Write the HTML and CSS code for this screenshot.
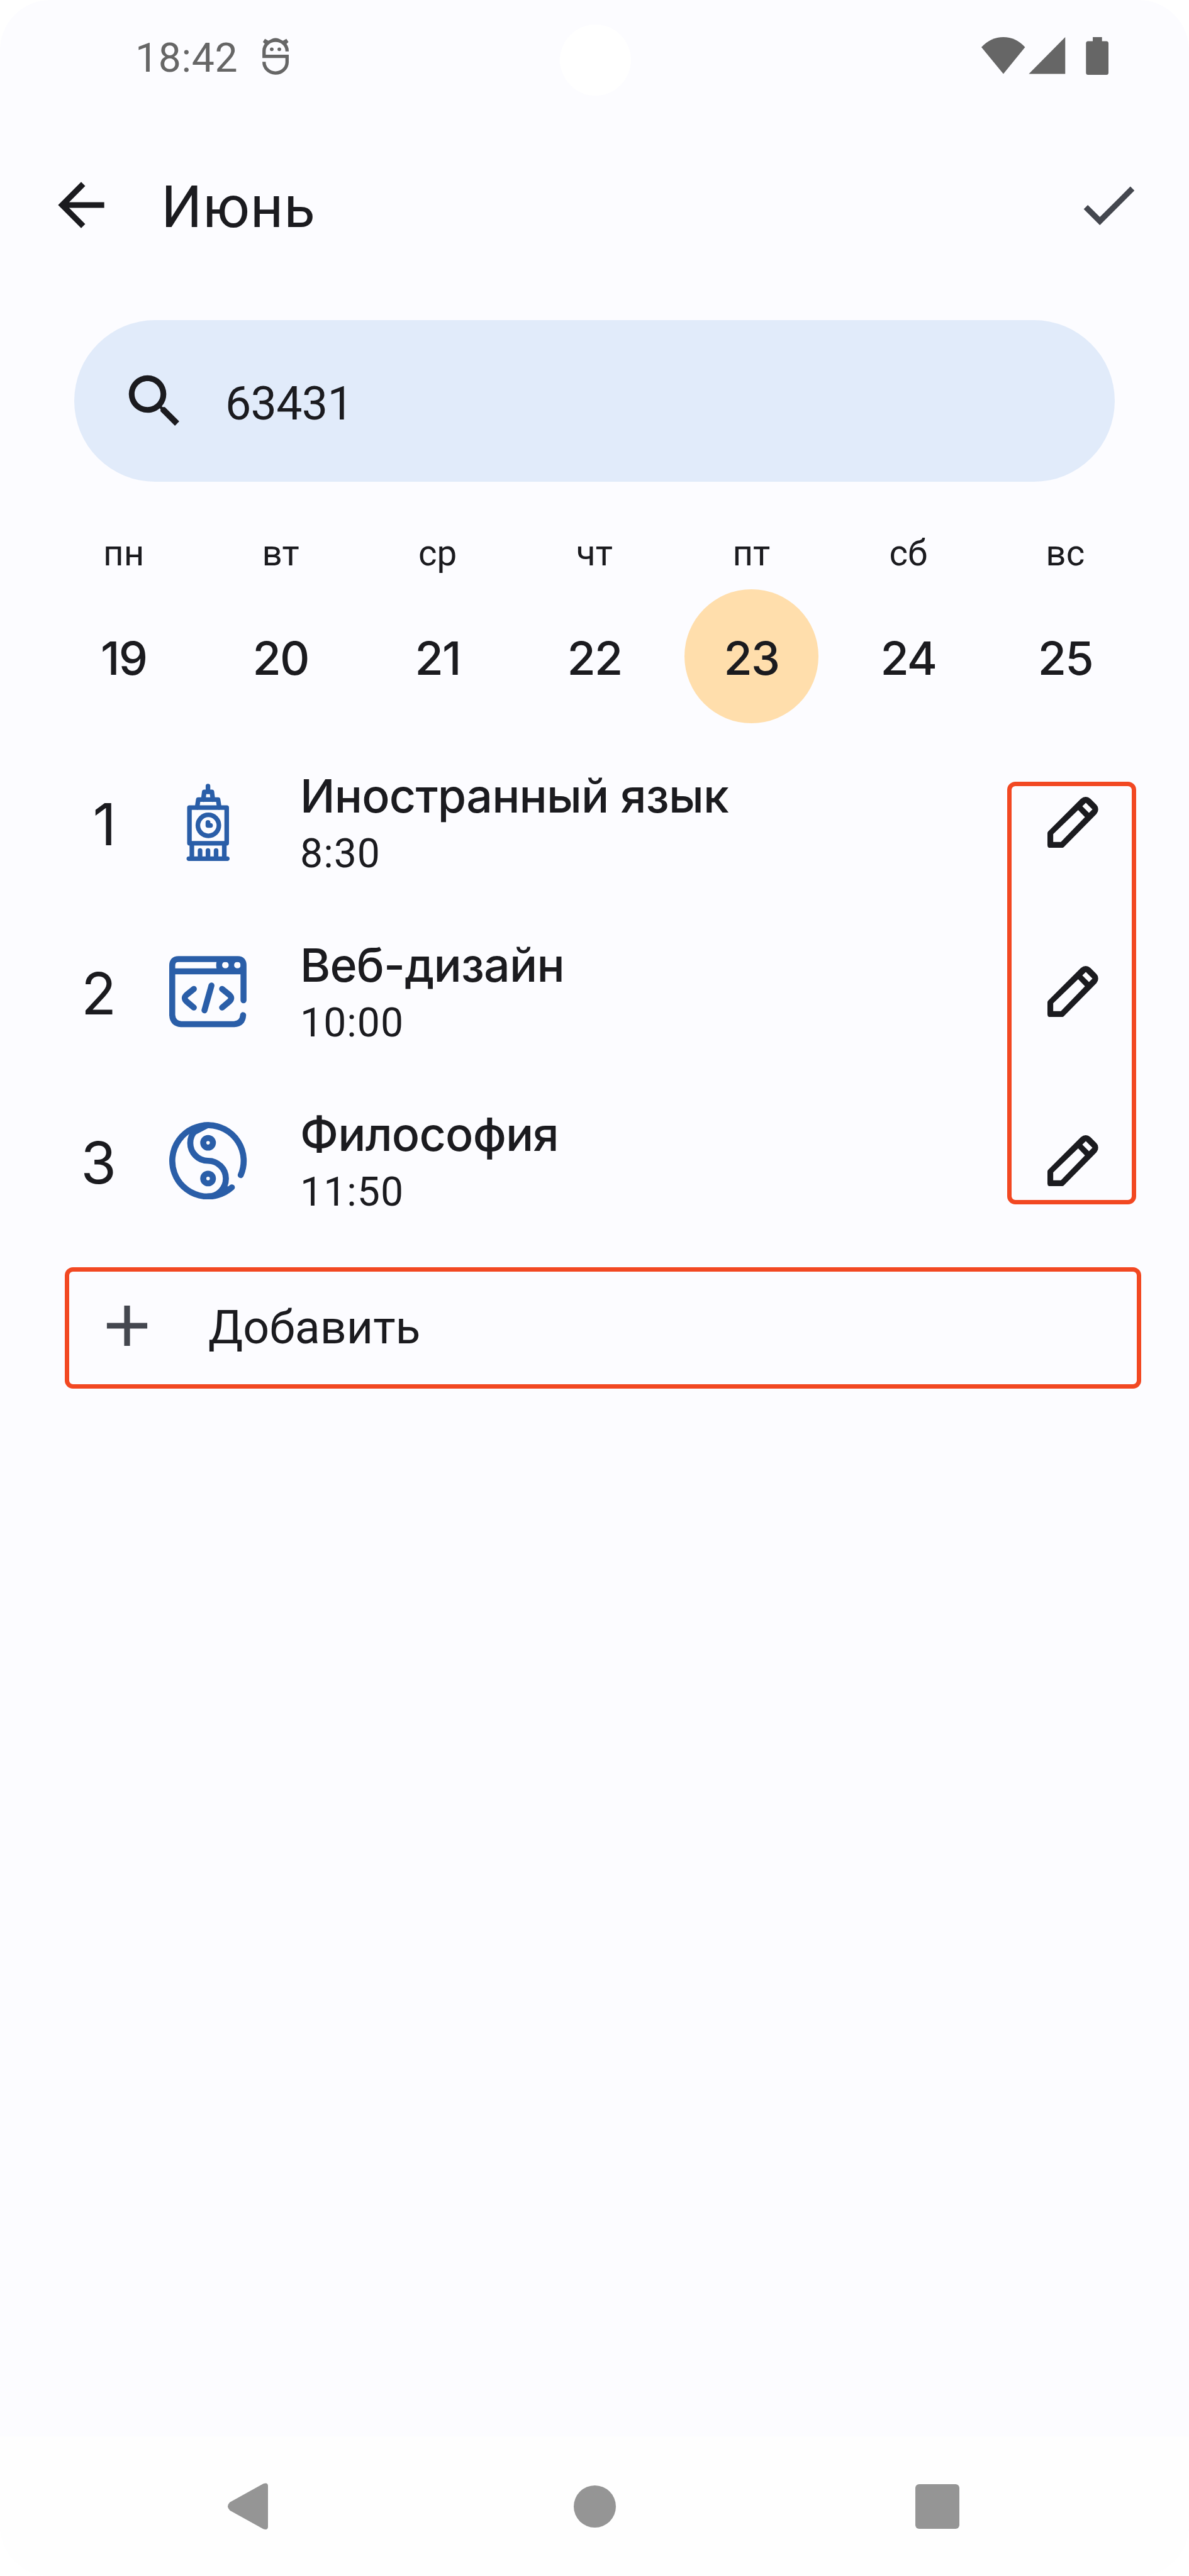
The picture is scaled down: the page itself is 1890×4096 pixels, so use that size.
FILE: index.html
```html
<!DOCTYPE html>
<html lang="ru">
<head>
<meta charset="utf-8">
<title>Июнь</title>
<link rel="stylesheet" href="styles.css">
</head>
<body>
<svg class="defs" aria-hidden="true">
  <symbol id="pencil" viewBox="364 192 291 293">
    <path fill-rule="evenodd" d="M364 400Q364 394 369 389L555 204Q584 180 611 204L645 238Q667 263 645 290L462 476Q454 485 446 485H380Q364 485 364 470ZM397 406V451H441L579 308L540 268ZM584 226L622 264L602 284L564 246Z"/>
  </symbol>
</svg>
<div class="screen">
  <div class="camera"></div>
  <header class="status">
    <span class="clock">18:42</span>
    <svg class="debug" viewBox="501 72 51 71.5">
      <g fill="none" stroke="#666" stroke-width="6.4">
        <path d="M548.3 98V97A22 20 0 0 0 504.300 97V107.600H548.300V119A22 21 0 0 1 504.300 118"/>
      </g>
      <path fill="#666" d="M506 74L513 78L507 85L502 80ZM547 74L540 78L546 85L551 80ZM513 79Q526 66 540 79Q526 76 513 79Z"/>
      <circle cx="519" cy="94" r="3.500" fill="#666"/><circle cx="533.500" cy="94" r="3.500" fill="#666"/>
    </svg>
    <svg class="signals" viewBox="1875 71 243 72.500" fill="#666">
      <path d="M1875 90.300Q1893 71 1917 71T1958.500 90.300L1917 141.300Z"/>
      <path d="M1965.700 141.500L2035.300 71V141.500Z"/>
      <path d="M2088 71H2105.600V78.700H2114Q2118 78.700 2118 83V139Q2118 143.300 2114 143.300H2079Q2075 143.300 2075 139V83Q2075 78.700 2079 78.700H2088Z"/>
    </svg>
  </header>

  <div class="appbar">
    <svg class="icon24 ink" viewBox="0 0 24 24"><path d="M20 11H7.830l5.590-5.590L12 4l-8 8 8 8 1.410-1.410L7.830 13H20z"/></svg>
    <h1 class="title">Июнь</h1>
    <svg class="icon24 muted" viewBox="0 0 24 24"><path d="M9 16.170L4.830 12l-1.420 1.410L9 19 21 7l-1.410-1.410z"/></svg>
  </div>

  <div class="search">
    <svg class="icon24 ink" viewBox="0 0 24 24"><path d="M15.500 14h-.790l-.280-.270A6.471 6.471 0 0 0 16 9.500 6.500 6.500 0 1 0 9.500 16c1.610 0 3.090-.590 4.230-1.570l.270.280v.790l5 4.990L20.490 19zm-6 0C7.010 14 5 11.990 5 9.500S7.010 5 9.500 5 14 7.010 14 9.500 11.990 14 9.500 14z"/></svg>
    <span class="query">63431</span>
  </div>

  <div class="week">
    <div class="day"><span class="dow">пн</span><span class="date">19</span></div>
    <div class="day"><span class="dow">вт</span><span class="date">20</span></div>
    <div class="day"><span class="dow">ср</span><span class="date">21</span></div>
    <div class="day"><span class="dow">чт</span><span class="date">22</span></div>
    <div class="day"><span class="dow">пт</span><span class="date selected">23</span></div>
    <div class="day"><span class="dow">сб</span><span class="date">24</span></div>
    <div class="day"><span class="dow">вс</span><span class="date">25</span></div>
  </div>

  <main class="lessons">
    <div class="lesson">
      <span class="num">1</span>
      <svg class="subject" viewBox="584 202 388 388">
        <g fill="none" stroke="#2a5ea8" stroke-width="23" stroke-linecap="round" stroke-linejoin="round">
          <path d="M777.500 214V242M754 282L759 243H797L802 282M723 322L729 282H828L834 322M685 322H871V500H685ZM697 500V577M859 500V577M682 577H874M738 536V577M777.500 536V577M818 536V577"/>
          <circle cx="779.500" cy="410.500" r="52.500"/>
          <path d="M777.500 396V411H790" stroke-width="24"/>
        </g>
      </svg>
      <div class="about"><span class="name">Иностранный язык</span><span class="time">8:30</span></div>
      <svg class="pencil"><use href="#pencil"/></svg>
    </div>
    <div class="lesson">
      <span class="num">2</span>
      <svg class="subject" viewBox="584 1046.500 388 388">
        <g fill="none" stroke="#2a5ea8" stroke-width="30" stroke-linecap="round" stroke-linejoin="round">
          <path d="M955 1284V1108Q955 1078 927 1078H630Q599 1078 599 1110V1358Q602 1400 643 1403H908Q950 1401 953 1358M599 1139H955"/>
          <path d="M707 1227L671 1256Q652 1273 671 1290L707 1320M795 1210L760 1334M848 1227L884 1256Q903 1273 884 1290L848 1320"/>
        </g>
        <path fill="#2a5ea8" fill-rule="evenodd" d="M822 1085H955V1132H822Q815 1108 822 1085ZM848 1108a16.500 16.500 0 1 0 33 0a16.500 16.500 0 1 0-33 0ZM908 1108a16.500 16.500 0 1 0 33 0a16.500 16.500 0 1 0-33 0Z"/>
      </svg>
      <div class="about"><span class="name">Веб-дизайн</span><span class="time">10:00</span></div>
      <svg class="pencil"><use href="#pencil"/></svg>
    </div>
    <div class="lesson">
      <span class="num">3</span>
      <svg class="subject" viewBox="23.100 364 148.400 148.400">
        <g fill="none" stroke="#2a5ea8" stroke-width="11.600" stroke-linecap="round">
          <path d="M159.700 465.400A68.200 68.200 0 1 0 142.700 489"/>
          <path d="M97.300 370.200A34 34 0 0 0 97.300 438.200A34 34 0 0 1 97.300 506.200"/>
          <circle cx="97.300" cy="403.800" r="9.200"/><circle cx="97.300" cy="472" r="9.200"/>
        </g>
        <path fill="#2a5ea8" d="M60 386L97 369V376L70 390ZM134 487L146 488L118 504L98 510V504Z"/>
      </svg>
      <div class="about"><span class="name">Философия</span><span class="time">11:50</span></div>
      <svg class="pencil"><use href="#pencil"/></svg>
    </div>
    <div class="highlight"></div>
  </main>

  <div class="add">
    <svg class="icon24 muted" viewBox="0 0 24 24"><path d="M19 13h-6v6h-2v-6H5v-2h6V5h2v6h6z"/></svg>
    <span class="add-label">Добавить</span>
  </div>

  <nav class="nav">
    <svg class="nav-back" viewBox="0 0 77 89.500"><path d="M4 37L68 1.500Q77-2 77 6V83.500Q77 91 68 88L4 52.500Q-4 45 4 37Z"/></svg>
    <span class="nav-home"></span>
    <span class="nav-recent"></span>
  </nav>
</div>
</body>
</html>
```

FILE: styles.css
```css
* { box-sizing: border-box; }
html { background: #fff; }
body { margin: 0; color: #1b1b1f; font-family: Roboto, sans-serif; }
svg { display: block; flex: none; }
.defs { position: absolute; width: 0; height: 0; }

.screen {
  position: relative;
  display: flex;
  flex-direction: column;
  width: 1890px;
  height: 4096px;
  overflow: hidden;
  background: #fcfcff;
  border-radius: 80px;
}
.camera {
  position: absolute;
  left: 890px;
  top: 39px;
  width: 113px;
  height: 113px;
  border-radius: 50%;
  background: #fff;
}

.status { display: flex; align-items: center; height: 179px; padding: 0 128px 0 215px; color: #666; }
.clock { width: 202px; padding-top: 5px; font-size: 64.3px; line-height: 76px; letter-spacing: 0.6px; white-space: nowrap; }
.debug { width: 42.4px; height: 59.5px; }
.signals { width: 202px; height: 60.3px; margin-left: auto; }

.icon24 { width: 110px; height: 110px; }
.ink { fill: #1b1b1f; }
.muted { fill: #44474f; }

.appbar { display: flex; align-items: center; gap: 72px; height: 293px; padding: 0 73px 0 74px; }
.title { flex: 1; margin: 0; padding-top: 9px; font-size: 91.9px; font-weight: 400; line-height: 110px; letter-spacing: 0.5px; }

.search {
  display: flex;
  align-items: center;
  gap: 57px;
  height: 257px;
  margin: 37px 118px 0;
  padding-left: 73px;
  border-radius: 129px;
  background: #e1ebfa;
}
.query { padding-top: 8px; font-size: 73.5px; line-height: 86px; letter-spacing: -0.7px; }

.week { display: grid; grid-template-columns: repeat(7, 1fr); margin: 82px 72px 0; }
.day { display: flex; flex-direction: column; align-items: center; gap: 25px; }
.dow { font-size: 56.5px; line-height: 64px; }
.date {
  display: flex;
  align-items: center;
  justify-content: center;
  width: 213px;
  height: 213px;
  padding-top: 7px;
  border-radius: 50%;
  font: 500 73.5px/1 Inter, sans-serif;
  letter-spacing: -1.8px;
}
.selected { background: #ffdeac; }

.lessons { position: relative; margin-top: 23px; }
.lesson { display: flex; align-items: center; height: 269.1px; padding: 0 144.5px 0 80px; }
.num { width: 105px; padding-top: 6px; font: 400 91.9px/110px Inter, sans-serif; text-align: right; }
.subject { width: 123.5px; height: 123.5px; margin-left: 84px; }
.about { display: flex; flex-direction: column; margin-left: 84.5px; padding-top: 5px; }
.name { font: 500 73.5px/95px Inter, sans-serif; letter-spacing: -0.8px; white-space: nowrap; }
.time { font-size: 64.3px; line-height: 89px; letter-spacing: 1px; }
.pencil { width: 80.7px; height: 81.3px; margin-left: auto; fill: #1b1b1f; }
.highlight {
  position: absolute;
  left: 1601px;
  top: 70px;
  width: 205px;
  height: 672px;
  border: 7px solid #f24822;
  border-radius: 13px;
}

.add {
  display: flex;
  align-items: center;
  gap: 74px;
  width: 1711px;
  height: 193px;
  margin: 34.3px 0 0 103px;
  padding-left: 37px;
  border: 7px solid #f24822;
  border-radius: 13px;
}
.add .icon24 { margin-bottom: 6px; }
.add-label { font-size: 73.5px; line-height: 86px; }

.nav {
  display: flex;
  align-items: center;
  justify-content: space-between;
  height: 222px;
  margin-top: auto;
  padding: 0 365px 0 362px;
  background: #fefefe;
}
.nav-back { width: 64px; height: 74.5px; fill: #959595; }
.nav-home { width: 67px; height: 67px; margin-left: 9px; border-radius: 50%; background: #959595; }
.nav-recent { width: 70px; height: 71px; border-radius: 6px; background: #959595; }
```
